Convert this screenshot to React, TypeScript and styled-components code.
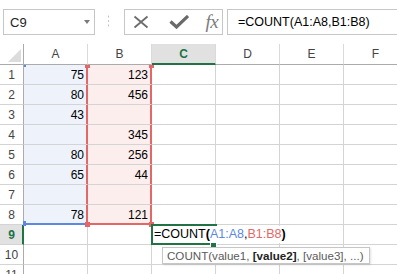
import { createGlobalStyle, styled } from "styled-components";

const GlobalStyle = createGlobalStyle`
    body {
        margin: 0;
        background: #ffffff;
        overflow: hidden;
    }
`;

const GREEN = "#217346";
const BLUE = "#5b88e2";
const RED = "#e46767";
const GRID = "#d4d4d4";

const AppWrapper = styled.div`
    width: 397px;
    height: 274px;
    overflow: hidden;
    font-family: "Liberation Sans", Arial, sans-serif;
    color: #000;
`;

const FormulaBar = styled.div`
    height: 44px;
    box-sizing: border-box;
    padding-top: 9px;
    display: flex;
    align-items: flex-start;
`;

const NameBox = styled.div`
    margin-left: 3px;
    width: 102px;
    height: 26px;
    box-sizing: border-box;
    border: 1px solid #c6c6c6;
    padding: 0 4px 0 6px;
    display: flex;
    align-items: center;
    justify-content: space-between;
    font-size: 13px;
    color: #222;
`;

const DropArrow = styled.span`
    width: 0;
    height: 0;
    border-left: 3.5px solid transparent;
    border-right: 3.5px solid transparent;
    border-top: 4px solid #7a7a7a;
`;

const Grip = styled.svg`
    margin-left: 13px;
    margin-top: 6px;
`;

const ButtonBox = styled.div`
    margin-left: 15px;
    width: 110px;
    height: 26px;
    box-sizing: border-box;
    border: 1px solid #c6c6c6;
    display: flex;
    align-items: center;
    gap: 20px;
    padding-left: 8px;
`;

const Fx = styled.span`
    margin-left: -4px;
    font-family: "Liberation Serif", "Times New Roman", serif;
    font-style: italic;
    font-size: 19px;
    color: #7b7b7b;
    letter-spacing: -0.5px;
`;

const FormulaInput = styled.div`
    margin-left: 4px;
    flex: none;
    width: 170px;
    height: 26px;
    box-sizing: border-box;
    border: 1px solid #c6c6c6;
    border-right: none;
    padding: 3px 0 0 10px;
    font-size: 12.5px;
    line-height: 18px;
    white-space: nowrap;
`;

const Sheet = styled.div`
    display: grid;
    grid-template-columns: 24px repeat(6, 64px);
    grid-template-rows: 21px;
    grid-auto-rows: 20px;
    font-size: 12px;
`;

const Corner = styled.div`
    box-sizing: border-box;
    border-right: 1px solid #ababab;
    border-bottom: 1px solid #ababab;
    display: flex;
    justify-content: flex-end;
    align-items: flex-end;
    padding: 0 2px 2px 0;

    &::after {
        content: "";
        border-left: 13px solid transparent;
        border-bottom: 13px solid #dcdcdc;
    }
`;

const ColHeader = styled.div<{ $active?: boolean }>`
    box-sizing: border-box;
    border-right: 1px solid #dadada;
    border-bottom: ${(p) => (p.$active ? `2px solid ${GREEN}` : "1px solid #ababab")};
    background: ${(p) => (p.$active ? "#e1e1e1" : "#ffffff")};
    color: ${(p) => (p.$active ? GREEN : "#444")};
    font-weight: ${(p) => (p.$active ? "bold" : "normal")};
    text-align: center;
    padding-top: 2px;
    line-height: 17px;
`;

const RowHeader = styled.div<{ $active?: boolean }>`
    box-sizing: border-box;
    border-right: ${(p) => (p.$active ? `2px solid ${GREEN}` : "1px solid #ababab")};
    border-bottom: 1px solid ${GRID};
    background: ${(p) => (p.$active ? "#e1e1e1" : "#ffffff")};
    color: ${(p) => (p.$active ? GREEN : "#444")};
    font-weight: ${(p) => (p.$active ? "bold" : "normal")};
    text-align: center;
    padding: 2px 0 0 ${(p) => (p.$active ? 1 : 0)}px;
    line-height: 17px;
`;

// a cell of a highlighted formula range: the range colour draws a 2px edge on its right / bottom
const Cell = styled.div<{ $fill?: string; $right?: string; $bottom?: string }>`
    position: relative;
    box-sizing: border-box;
    border-right: 1px solid ${(p) => p.$right ?? GRID};
    border-bottom: 1px solid ${(p) => p.$bottom ?? GRID};
    box-shadow: ${(p) =>
        [p.$right && `inset -1px 0 0 ${p.$right}`, p.$bottom && `inset 0 -1px 0 ${p.$bottom}`]
            .filter(Boolean)
            .join(", ") || "none"};
    background: ${(p) => p.$fill ?? "#ffffff"};
    text-align: right;
    padding: 2px 3px 0 0;
    line-height: 17px;
`;

const Mark = styled.span<{ $color: string; $x: number; $y: number; $w: number; $h: number }>`
    position: absolute;
    z-index: 2;
    left: ${(p) => p.$x}px;
    top: ${(p) => p.$y}px;
    width: ${(p) => p.$w}px;
    height: ${(p) => p.$h}px;
    background: ${(p) => p.$color};
`;

const EditFrame = styled.div`
    position: absolute;
    z-index: 3;
    left: -1px;
    top: -1px;
    width: 66px;
    height: 21px;
    box-sizing: border-box;
    border: 2px solid ${GREEN};
    border-right: none;
`;

const CellEditor = styled.div`
    position: absolute;
    z-index: 3;
    left: 1px;
    top: 1px;
    width: 138px;
    height: 17px;
    background: #ffffff;
    padding-left: 1px;
    text-align: left;
    font-size: 12.5px;
    line-height: 16px;
    white-space: nowrap;
`;

const FillHandle = styled.div`
    position: absolute;
    z-index: 4;
    left: 58px;
    top: 17px;
    width: 5px;
    height: 5px;
    background: ${GREEN};
    border: 1px solid #ffffff;
`;

const Ref = styled.span<{ $color: string }>`
    color: ${(p) => p.$color};
`;

const Paren = styled.b`
    font-weight: bold;
`;

const Tooltip = styled.div`
    position: absolute;
    z-index: 5;
    left: 10px;
    top: 22px;
    height: 17px;
    box-sizing: border-box;
    border: 1px solid #c6c6c6;
    background: #ffffff;
    box-shadow: 1px 1px 2px rgba(0, 0, 0, 0.12);
    padding: 0 5px 0 4px;
    text-align: left;
    font-size: 11.6px;
    line-height: 15px;
    color: #5a5a5a;
    white-space: nowrap;
`;

const ActiveArg = styled.b`
    color: #222;
`;

const COLUMNS = ["A", "B", "C", "D", "E", "F"];

const DATA: (number | null)[][] = [
    [75, 123],
    [80, 456],
    [43, null],
    [null, 345],
    [80, 256],
    [65, 44],
    [null, null],
    [78, 121]
];

const RANGE_FILL = ["#edf2fb", "#fdeeee"];

const renderMarks = (row: number, ci: number) => {
    if (ci > 1) return null;
    if (row === 1) {
        return (
            <>
                {ci === 0 && <Mark $color={BLUE} $x={0} $y={0} $w={2} $h={2} />}
                <Mark $color={RED} $x={61} $y={0} $w={5} $h={3} />
            </>
        );
    }
    if (row === 8) {
        return (
            <>
                {ci === 0 && <Mark $color={BLUE} $x={-1} $y={16} $w={3} $h={5} />}
                <Mark $color={RED} $x={61} $y={17} $w={5} $h={5} />
            </>
        );
    }
    return null;
};

const App = () => {
    const rows = Array.from({ length: 11 }, (_, i) => i + 1);

    return (
        <AppWrapper>
            <GlobalStyle />
            <FormulaBar>
                <NameBox>
                    C9
                    <DropArrow />
                </NameBox>
                <Grip width="2" height="12" viewBox="0 0 2 12">
                    <rect x="0" y="0" width="2" height="2" fill="#bdbdbd" />
                    <rect x="0" y="5" width="2" height="2" fill="#bdbdbd" />
                    <rect x="0" y="10" width="2" height="2" fill="#bdbdbd" />
                </Grip>
                <ButtonBox>
                    <svg width="16" height="14" viewBox="0 0 16 14">
                        <path d="M1.5 1.5 L14.5 12.5 M14.5 1.5 L1.5 12.5" stroke="#6c6c6c" strokeWidth="1.8" fill="none" />
                    </svg>
                    <svg width="20" height="14" viewBox="0 0 20 14">
                        <path d="M1.5 6.5 L7.5 12 L19 1" stroke="#6a6a6a" strokeWidth="3.2" fill="none" />
                    </svg>
                    <Fx>fx</Fx>
                </ButtonBox>
                <FormulaInput>=COUNT(A1:A8,B1:B8)</FormulaInput>
            </FormulaBar>

            <Sheet>
                <Corner />
                {COLUMNS.map((col) => (
                    <ColHeader key={col} $active={col === "C"}>
                        {col}
                    </ColHeader>
                ))}
                {rows.map((row) => [
                    <RowHeader key={`h${row}`} $active={row === 9}>
                        {row}
                    </RowHeader>,
                    ...COLUMNS.map((col, ci) => {
                        const inRange = row <= 8 && ci < 2;
                        const isEditing = row === 9 && col === "C";
                        return (
                            <Cell
                                key={`${col}${row}`}
                                $fill={inRange ? RANGE_FILL[ci] : undefined}
                                $right={inRange ? RED : undefined}
                                $bottom={row === 8 && ci < 2 ? (ci === 0 ? BLUE : RED) : undefined}
                            >
                                {inRange ? DATA[row - 1][ci] ?? "" : ""}
                                {renderMarks(row, ci)}
                                {isEditing && (
                                    <>
                                        <EditFrame />
                                        <CellEditor>
                                            =COUNT<Paren>(</Paren>
                                            <Ref $color={BLUE}>A1:A8</Ref>,<Ref $color={RED}>B1:B8</Ref>
                                            <Paren>)</Paren>
                                        </CellEditor>
                                        <FillHandle />
                                        <Tooltip>
                                            COUNT(value1, <ActiveArg>[value2]</ActiveArg>, [value3], ...)
                                        </Tooltip>
                                    </>
                                )}
                            </Cell>
                        );
                    })
                ])}
            </Sheet>
        </AppWrapper>
    );
};

export default App;
